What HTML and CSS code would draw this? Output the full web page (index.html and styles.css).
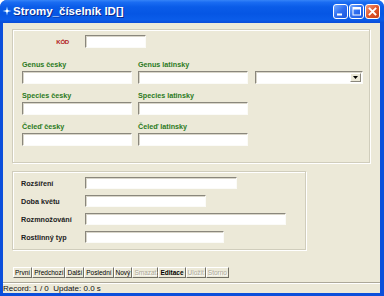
FILE: index.html
```html
<!DOCTYPE html>
<html lang="cs">
<head>
<meta charset="utf-8">
<title>Stromy_číselník</title>
<link rel="stylesheet" href="styles.css">
</head>
<body>
<div class="window">
  <div class="titlebar">
    <svg class="appicon" viewBox="0 0 10 10" width="10" height="10">
      <path d="M5 0.5 L6 4 L9.5 5 L6 6 L5 9.5 L4 6 L0.5 5 L4 4 Z" fill="#9fd0ff"/>
      <circle cx="5" cy="5" r="1.3" fill="#ffffff"/>
    </svg>
    <span class="title">Stromy_číselník ID[]</span>
    <div class="tbtns">
      <span class="tbtn blue"><svg viewBox="0 0 13 13" width="13" height="13"><rect x="3" y="8.5" width="5" height="2" fill="#fff"/></svg></span>
      <span class="tbtn blue"><svg viewBox="0 0 13 13" width="13" height="13"><rect x="3" y="2.5" width="7.5" height="7.5" fill="none" stroke="#fff" stroke-width="1"/><rect x="3" y="2.5" width="7.5" height="2" fill="#fff"/></svg></span>
      <span class="tbtn red"><svg viewBox="0 0 13 13" width="13" height="13"><path d="M3.5 3.5 L9.5 9.5 M9.5 3.5 L3.5 9.5" stroke="#fff" stroke-width="1.8" stroke-linecap="square"/></svg></span>
    </div>
  </div>
  <div class="client">
    <div class="content">
      <div class="panel p1">
        <div class="kod-row">
          <span class="kod-label">KÓD</span>
          <span class="input kod-input"></span>
        </div>
        <div class="grid">
          <div class="field"><div class="lbl">Genus česky</div><div class="input"></div></div>
          <div class="field"><div class="lbl">Genus latinsky</div><div class="input"></div></div>
          <div class="field col3"><div class="lbl"></div><div class="input select"><span class="arrow"><svg viewBox="0 0 5 3" width="5" height="3"><path d="M0 0 H5 L2.5 3 Z" fill="#000"/></svg></span></div></div>
          <div class="field"><div class="lbl">Species česky</div><div class="input"></div></div>
          <div class="field"><div class="lbl">Species latinsky</div><div class="input"></div></div>
          <div class="field col3"></div>
          <div class="field"><div class="lbl">Čeleď česky</div><div class="input"></div></div>
          <div class="field"><div class="lbl">Čeleď latinsky</div><div class="input"></div></div>
        </div>
      </div>
      <div class="panel p2">
        <div class="row"><span class="rlbl">Rozšíření</span><span class="input small w152"></span></div>
        <div class="row"><span class="rlbl">Doba květu</span><span class="input small w121"></span></div>
        <div class="row"><span class="rlbl">Rozmnožování</span><span class="input small w201"></span></div>
        <div class="row"><span class="rlbl">Rostlinný typ</span><span class="input small w139"></span></div>
      </div>
      <div class="buttons">
        <span class="btn">První</span>
        <span class="btn">Předchozí</span>
        <span class="btn">Další</span>
        <span class="btn">Poslední</span>
        <span class="btn">Nový</span>
        <span class="btn disabled">Smazat</span>
        <span class="btn bold">Editace</span>
        <span class="btn disabled">Uložit</span>
        <span class="btn disabled">Storno</span>
      </div>
    </div>
    <div class="status">Record: 1 / 0&nbsp; Update: 0.0 s</div>
  </div>
</div>
</body>
</html>
```

FILE: styles.css
```css
* { box-sizing: border-box; }
html, body { margin: 0; padding: 0; }
body {
  width: 384px;
  height: 296px;
  overflow: hidden;
  background: #ffffff;
  font-family: "Liberation Sans", Arial, sans-serif;
}
.window {
  width: 384px;
  height: 296px;
  display: flex;
  flex-direction: column;
  background: #0b4fdb;
  border-radius: 7px 7px 0 0;
  overflow: hidden;
}
.titlebar {
  height: 23px;
  flex: none;
  display: flex;
  align-items: center;
  padding: 0 4px 1px 2px;
  background: linear-gradient(#3584f8 0%, #1a6cf2 10%, #0a5ce8 30%, #0656e4 60%, #0a5ce9 85%, #0a4cd8 100%);
}
.appicon { flex: none; margin-right: 1px; }
.title {
  flex: 1;
  color: #ffffff;
  font-weight: bold;
  font-size: 11.5px;
  line-height: 14px;
  text-shadow: 1px 1px 0 #0b2a8c;
  white-space: nowrap;
}
.tbtns { display: flex; gap: 1px; }
.tbtn {
  width: 15px;
  height: 15px;
  border: 1px solid #ffffff;
  border-radius: 3px;
  display: flex;
  align-items: center;
  justify-content: center;
}
.tbtn.blue { background: linear-gradient(135deg, #74aaff 0%, #2e6ef0 50%, #1d57dc 100%); }
.tbtn.red { background: linear-gradient(135deg, #f29a7c 0%, #e0572c 50%, #c83d14 100%); }

.client {
  flex: 1;
  margin: 0 4px 3px 3px;
  background: #ece9d8;
  display: flex;
  flex-direction: column;
}
.content {
  flex: 1;
  padding: 6px 0 0 9px;
}
.panel {
  border: 1px solid #d0cdbc;
  box-shadow: inset 1px 1px 0 #ffffff, 1px 1px 0 #ffffff;
}
.p1 {
  width: 358px;
  height: 134px;
  padding: 5px 0 0 9px;
}
.kod-row {
  display: flex;
  align-items: center;
  height: 13px;
}
.kod-label {
  width: 47px;
  margin-right: 16px;
  text-align: right;
  color: #b01818;
  font-weight: bold;
  font-size: 6px;
  letter-spacing: -0.2px;
}
.input {
  display: block;
  height: 13px;
  background: #ffffff;
  border-style: solid;
  border-width: 1px;
  border-color: #8a877c #fbfbf8 #fbfbf8 #8a877c;
  box-shadow: inset 1px 1px 0 #d9d6ca;
}
.kod-input { width: 61px; }
.grid {
  margin-top: 12px;
  display: grid;
  grid-template-columns: 110px 110px 109px;
  column-gap: 6px;
  row-gap: 7px;
}
.col3 { margin-left: 1px; }
.lbl {
  height: 9px;
  line-height: 9px;
  margin-bottom: 2px;
  color: #2b7a22;
  font-weight: bold;
  font-size: 7.2px;
  white-space: nowrap;
}
.select {
  display: flex;
  justify-content: flex-end;
  align-items: center;
  padding-right: 1px;
}
.arrow {
  width: 11px;
  height: 9px;
  background: #ece9d8;
  border: 1px solid;
  border-color: #ffffff #8a877c #8a877c #ffffff;
  display: flex;
  align-items: center;
  justify-content: center;
}
.p2 {
  width: 294px;
  height: 79px;
  margin-top: 8px;
  padding: 5px 0 0 8px;
}
.row {
  display: flex;
  align-items: center;
  height: 12px;
  margin-bottom: 6px;
}
.rlbl {
  width: 64px;
  color: #222222;
  font-weight: bold;
  font-size: 7.2px;
  white-space: nowrap;
}
.input.small { height: 12px; }
.w152 { width: 152px; }
.w121 { width: 121px; }
.w201 { width: 201px; }
.w139 { width: 139px; }

.buttons {
  display: flex;
  margin: 17px 0 0 1px;
}
.btn {
  height: 11px;
  padding: 0 1px;
  border: 1px solid;
  border-color: #ffffff #716f64 #716f64 #ffffff;
  background: #ece9d8;
  font-size: 6.5px;
  line-height: 9px;
  color: #000000;
  white-space: nowrap;
}
.btn.bold { font-weight: bold; }
.btn.disabled {
  color: #aca899;
  text-shadow: 1px 1px 0 #ffffff;
}
.status {
  flex: none;
  height: 11px;
  border-top: 1px solid #aca899;
  box-shadow: inset 0 1px 0 #ffffff;
  padding-top: 1px;
  font-size: 8px;
  line-height: 9px;
  color: #111111;
  white-space: nowrap;
}
```
